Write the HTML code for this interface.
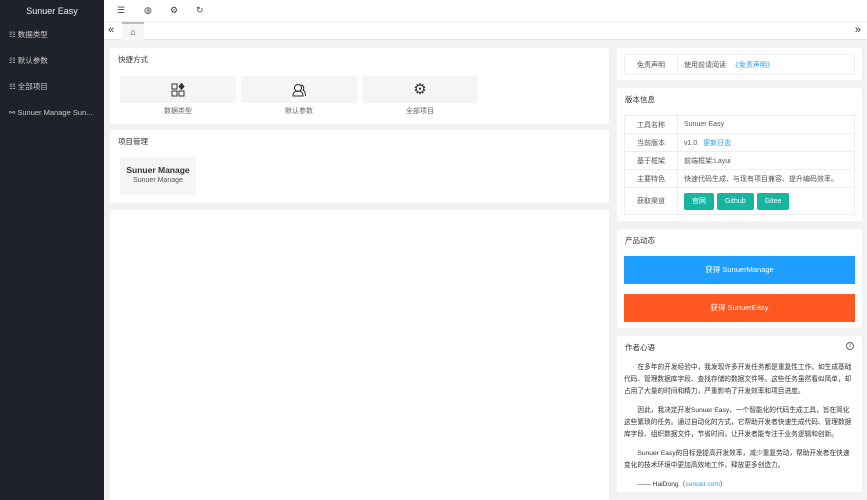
<!DOCTYPE html><html><head><meta charset="utf-8"><style>
*{margin:0;padding:0;box-sizing:border-box}
body{width:867px;height:500px;overflow:hidden;background:#f2f2f2;font-family:"Liberation Sans","Noto Sans CJK SC",sans-serif;font-size:8px;color:#333;position:relative}
.side{position:absolute;left:0;top:0;width:104px;height:500px;background:#20222a;color:#ddd}
.side .logo{height:22px;line-height:22px;text-align:center;font-size:9px;color:#eee}
.side .it{height:26px;line-height:26px;padding-left:9px;font-size:7.5px;color:#ccc}
.top{position:absolute;left:104px;top:0;right:0;height:22px;background:#fff;border-bottom:1px solid #eee}
.top span{position:absolute;top:5px;font-size:9px;color:#444}
.tabs{position:absolute;left:104px;top:22px;right:0;height:18px;background:#fff;border-bottom:1px solid #e6e6e6}
.card{position:absolute;background:#fff;border-radius:2px}
.ttl{padding:6px 8px;font-size:7.5px;color:#333}
.sc{position:absolute;top:28px;width:116px;height:27px;background:#f5f5f5;text-align:center}
.sl{position:absolute;top:58px;width:116px;text-align:center;font-size:7px;color:#666}
table{border-collapse:collapse;position:absolute;left:7px;width:231px}
td{border:1px solid #eee;height:18px;padding:0 6px;font-size:7px;color:#555}
td.k{width:53px;text-align:center}
.btn{display:inline-block;background:#16b5a0;color:#fff;height:17px;line-height:17px;padding:0 8px;border-radius:2px;margin-right:3px}
a{color:#1e9fff;text-decoration:none}
p{text-indent:2em;line-height:12px;font-size:6.7px;color:#333;margin:0 6px 7px 7px}
</style></head><body>
<div class="side"><div class="logo">Sunuer Easy</div>
<div class="it">☷ 数据类型</div><div class="it">☷ 默认参数</div><div class="it">☷ 全部项目</div><div class="it">⚯ Sunuer Manage Sun...</div></div>
<div class="top"><span style="left:13px">☰</span><span style="left:40px">◍</span><span style="left:66px">⚙</span><span style="left:92px">↻</span></div>
<div class="tabs"><span style="position:absolute;left:4px;top:2px;font-size:11px">«</span><div style="position:absolute;left:18px;top:0;width:22px;height:18px;border-top:2px solid #bbb;background:#f6f6f6;text-align:center;font-size:9px;line-height:16px">⌂</div><span style="position:absolute;right:6px;top:2px;font-size:11px">»</span></div>
<div class="card" style="left:110px;top:48px;width:499px;height:76px"><div class="ttl">快捷方式</div>
<div class="sc" style="left:10px"><svg width="14" height="14" viewBox="0 0 14 14" style="margin-top:7px" fill="none" stroke="#333"><rect x="1" y="1" width="5" height="5"/><rect x="1" y="8" width="5" height="5"/><rect x="8" y="8" width="5" height="5"/><path d="M10.5 0.5l2.5 3-2.5 3-2.5-3z" fill="#333"/></svg></div><div class="sl" style="left:10px">数据类型</div>
<div class="sc" style="left:131px"><svg width="14" height="14" viewBox="0 0 14 14" style="margin-top:7px" fill="none" stroke="#333"><circle cx="6" cy="5" r="3.5"/><path d="M1 13c0-4 2-5 5-5s5 1 5 5z"/><path d="M9 2a3 3 0 0 1 2 5c2 1 2.5 3 2.5 6"/></svg></div><div class="sl" style="left:131px">默认参数</div>
<div class="sc" style="left:252px;font-size:15px;line-height:27px">⚙</div><div class="sl" style="left:252px">全部项目</div></div>
<div class="card" style="left:110px;top:130px;width:499px;height:73px"><div class="ttl">项目管理</div>
<div style="position:absolute;left:10px;top:27px;width:76px;height:38px;background:#f5f5f5;text-align:center"><div style="font-weight:bold;font-size:8.5px;margin-top:8px">Sunuer Manage</div><div style="font-size:7px;color:#555;margin-top:2px">Sunuer Manage</div></div></div>
<div class="card" style="left:110px;top:210px;width:499px;height:290px"></div>
<div class="card" style="left:617px;top:48px;width:245px;height:32px"><table style="top:6px"><tr><td class="k" style="height:20px">免责声明</td><td>使用前请阅读 &nbsp;&nbsp;<a>《免责声明》</a></td></tr></table></div>
<div class="card" style="left:617px;top:88px;width:245px;height:133px"><div class="ttl">版本信息</div>
<table style="top:27px"><tr><td class="k">工具名称</td><td>Sunuer Easy</td></tr><tr><td class="k">当前版本</td><td>v1.0 &nbsp;&nbsp;<a>更新日志</a></td></tr><tr><td class="k">基于框架</td><td>前端框架:Layui</td></tr><tr><td class="k">主要特色</td><td>快速代码生成、与现有项目兼容、提升编码效率。</td></tr><tr><td class="k" style="height:27px">获取渠道</td><td><span class="btn">官网</span><span class="btn">Github</span><span class="btn">Gitee</span></td></tr></table></div>
<div class="card" style="left:617px;top:229px;width:245px;height:99px"><div class="ttl">产品动态</div>
<div style="position:absolute;left:7px;right:7px;top:27px;height:28px;background:#1e9fff;color:#fff;text-align:center;line-height:28px;font-size:7.5px">获得 SunuerManage</div>
<div style="position:absolute;left:7px;right:7px;top:65px;height:28px;background:#ff5722;color:#fff;text-align:center;line-height:28px;font-size:7.5px">获得 SunuerEasy</div></div>
<div class="card" style="left:617px;top:336px;width:245px;height:156px"><div class="ttl">作者心语<span style="float:right;border:1px solid #666;border-radius:50%;width:8px;height:8px;font-size:6px;line-height:7px;text-align:center">i</span></div>
<div style="margin-top:3px"><p>在多年的开发经验中，我发现许多开发任务都是重复性工作，如生成基础代码、管理数据库字段、查找存储的数据文件等。这些任务虽然看似简单，却占用了大量的时间和精力，严重影响了开发效率和项目进度。</p>
<p>因此，我决定开发Sunuer Easy，一个智能化的代码生成工具，旨在简化这些繁琐的任务。通过自动化的方式，它帮助开发者快速生成代码、管理数据库字段、组织数据文件，节省时间，让开发者能专注于业务逻辑和创新。</p>
<p>Sunuer Easy的目标是提高开发效率，减少重复劳动，帮助开发者在快速变化的技术环境中更加高效地工作，释放更多创造力。</p>
<p>—— HaiDong（<a>sunuer.com</a>）</p></div></div>
</body></html>
